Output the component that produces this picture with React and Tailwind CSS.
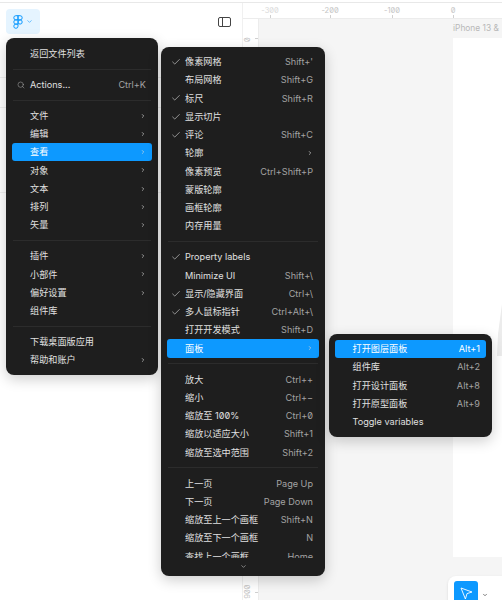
import React from 'react';
import { Check, ChevronDown, ChevronRight, Search } from 'lucide-react';

const mainMenu = [
  { label: '返回文件列表' },
  { divider: true },
  { label: 'Actions...', shortcut: 'Ctrl+K', search: true },
  { divider: true },
  { label: '文件', more: true },
  { label: '编辑', more: true },
  { label: '查看', more: true, active: true },
  { label: '对象', more: true },
  { label: '文本', more: true },
  { label: '排列', more: true },
  { label: '矢量', more: true },
  { divider: true },
  { label: '插件', more: true },
  { label: '小部件', more: true },
  { label: '偏好设置', more: true },
  { label: '组件库' },
  { divider: true },
  { label: '下载桌面版应用' },
  { label: '帮助和账户', more: true },
];

const viewMenu = [
  { label: '像素网格', shortcut: "Shift+'", checked: true },
  { label: '布局网格', shortcut: 'Shift+G' },
  { label: '标尺', shortcut: 'Shift+R', checked: true },
  { label: '显示切片', checked: true },
  { label: '评论', shortcut: 'Shift+C', checked: true },
  { label: '轮廓', more: true },
  { label: '像素预览', shortcut: 'Ctrl+Shift+P' },
  { label: '蒙版轮廓' },
  { label: '画框轮廓' },
  { label: '内存用量' },
  { divider: true },
  { label: 'Property labels', checked: true },
  { label: 'Minimize UI', shortcut: 'Shift+\\' },
  { label: '显示/隐藏界面', shortcut: 'Ctrl+\\', checked: true },
  { label: '多人鼠标指针', shortcut: 'Ctrl+Alt+\\', checked: true },
  { label: '打开开发模式', shortcut: 'Shift+D' },
  { label: '面板', more: true, active: true },
  { divider: true },
  { label: '放大', shortcut: 'Ctrl++' },
  { label: '缩小', shortcut: 'Ctrl+−' },
  { label: '缩放至 100%', shortcut: 'Ctrl+0' },
  { label: '缩放以适应大小', shortcut: 'Shift+1' },
  { label: '缩放至选中范围', shortcut: 'Shift+2' },
  { divider: true },
  { label: '上一页', shortcut: 'Page Up' },
  { label: '下一页', shortcut: 'Page Down' },
  { label: '缩放至上一个画框', shortcut: 'Shift+N' },
  { label: '缩放至下一个画框', shortcut: 'N' },
  { label: '查找上一个画框', shortcut: 'Home' },
];

const panelMenu = [
  { label: '打开图层面板', shortcut: 'Alt+1', active: true },
  { label: '组件库', shortcut: 'Alt+2' },
  { label: '打开设计面板', shortcut: 'Alt+8' },
  { label: '打开原型面板', shortcut: 'Alt+9' },
  { label: 'Toggle variables' },
];

const MenuRows = ({ items }) =>
  items.map((item, i) => {
    if (item.divider) {
      return (
        <div key={i} className="flex h-[12.75px] items-center px-[1px]">
          <div className="h-px w-full bg-[#2c2c2c]" />
        </div>
      );
    }
    return (
      <div
        key={i}
        className={`relative flex h-[18.25px] shrink-0 items-center justify-between rounded-[3px] pl-[18px] pr-[6px] ${
          item.active ? 'bg-[#0d99ff] text-white' : 'text-[#e0e0e0]'
        }`}
      >
        {item.checked && <Check size={10} strokeWidth={1.5} className="absolute left-[4px] text-[#d8d8d8]" />}
        {item.search && <Search size={8} strokeWidth={1.5} className="absolute left-[5px] text-[#b0b0b0]" />}
        <span className="whitespace-nowrap">{item.label}</span>
        {item.shortcut && <span className={item.active ? 'text-white' : 'text-[#a3a3a3]'}>{item.shortcut}</span>}
        {item.more && <ChevronRight size={6} strokeWidth={2.5} className="text-[#d8d8d8]" />}
      </div>
    );
  });

const FigmaLogo = () => (
  <svg width="10" height="14" viewBox="0 0 10 14" fill="none" stroke="#0d99ff" strokeWidth="1">
    <path d="M5 .7H2.9a2.1 2.1 0 0 0 0 4.2H5z" />
    <path d="M5 .7h2.1a2.1 2.1 0 0 1 0 4.2H5z" />
    <path d="M5 4.9H2.9a2.1 2.1 0 0 0 0 4.2H5z" />
    <circle cx="7.1" cy="7" r="2.1" />
    <path d="M5 9.1H2.9A2.1 2.1 0 1 0 5 11.2z" />
  </svg>
);

const ticks = [
  { label: '-300', tick: 'left-[27px]', text: 'text-[#dadada]' },
  { label: '-200', tick: 'left-[87px]', text: 'text-[#c4c4c4]' },
  { label: '-100', tick: 'left-[149px]', text: 'text-[#c4c4c4]' },
  { label: '0', tick: 'left-[210px]', text: 'text-[#c4c4c4]' },
];

export default function App() {
  return (
    <div className="relative flex h-[600px] w-[502px] flex-col overflow-hidden bg-white font-['Inter','Noto_Sans_CJK_SC',sans-serif] text-[9.15px] [font-feature-settings:'zero']">
      <div className="h-[3px] shrink-0 border-b border-[#e8e8e8] bg-white" />
      <div className="flex min-h-0 flex-1">
        {/* left panel */}
        <div className="w-[243px] shrink-0 border-r border-[#f0f0f0] bg-white">
          <div className="flex h-[75px] items-start justify-between border-b border-[#f0f0f0] pl-[6px] pr-[11px] pt-[6px]">
            <div className="flex h-[25px] w-[34px] items-center justify-center gap-[3px] rounded-[4px] bg-[#e5f4ff]">
              <FigmaLogo />
              <ChevronDown size={7} strokeWidth={2} className="text-[#0d99ff]" />
            </div>
            <svg width="13" height="10" viewBox="0 0 13 10" fill="none" stroke="#444" strokeWidth="1" className="mt-[8px]">
              <rect x=".5" y=".5" width="12" height="9" rx="1.5" />
              <path d="M4.5 .5v9" />
            </svg>
          </div>
          <div className="h-[30px] border-b border-[#f0f0f0]" />
          <div className="h-[85px] border-b border-[#f0f0f0]" />
        </div>

        {/* rulers + canvas */}
        <div className="flex min-w-0 flex-1 flex-col">
          <div className="relative h-[16px] shrink-0 border-b border-[#ececec] text-[7.5px]">
            {ticks.map((t) => (
              <React.Fragment key={t.label}>
                <span className={`absolute top-[2px] -translate-x-1/2 ${t.tick} ${t.text}`}>{t.label}</span>
                <div className={`absolute bottom-0 h-[3px] w-px bg-[#d0d0d0] ${t.tick}`} />
              </React.Fragment>
            ))}
          </div>
          <div className="flex min-h-0 flex-1">
            <div className="relative w-[16px] shrink-0 border-r border-[#ececec] bg-white text-[7.5px] text-[#c4c4c4]">
              <span className="absolute left-[2px] top-[15px] -rotate-90">0</span>
              <div className="absolute right-0 top-[19px] h-px w-[3px] bg-[#d0d0d0]" />
              <span className="absolute left-[-2px] top-[567px] -rotate-90">900</span>
              <div className="absolute right-0 top-[573px] h-px w-[3px] bg-[#d0d0d0]" />
            </div>
            <div className="relative min-w-0 flex-1 bg-[#f5f5f5]">
              <span className="absolute left-[194px] top-[3px] whitespace-nowrap text-[8.4px] text-[#b8b8b8]">iPhone 13 &amp;</span>
              <div className="absolute bottom-[43px] left-[194px] right-0 top-[19px] bg-white" />
              <svg width="5" height="52" viewBox="0 0 5 52" className="absolute right-0 top-[285px]">
                <polygon points="5,0 5,52 0,52 1,30" fill="#ececec" />
              </svg>
              <div className="absolute left-[189px] top-[557px] h-[30px] w-[60px] rounded-tl-[8px] bg-white pl-[6px] pt-[5px] shadow-sm">
                <div className="flex h-[25px] w-[24px] items-center justify-center rounded-[3px] bg-[#0d99ff]">
                  <svg width="13" height="13" viewBox="0 0 13 13" fill="none" stroke="#fff" strokeWidth="0.9" strokeLinejoin="round">
                    <path d="M1 1l11 4-5 1.6L5.4 12z" />
                  </svg>
                </div>
                <ChevronDown size={6} strokeWidth={2.5} className="absolute left-[34px] top-[16px] text-[#333]" />
              </div>
            </div>
          </div>
        </div>
      </div>

      {/* menus */}
      <div className="absolute left-[6px] top-[38px] w-[152px] rounded-[8px] bg-[#1e1e1e] px-[6px] pb-[5.5px] pt-[6.5px] shadow-[0_4px_14px_rgba(0,0,0,0.2)]">
        <MenuRows items={mainMenu} />
      </div>
      <div className="absolute left-[161px] top-[47px] h-[529px] w-[164px] rounded-[8px] bg-[#1e1e1e] px-[6px] pt-[5.75px] shadow-[0_4px_14px_rgba(0,0,0,0.2)]">
        <div className="h-[505px] overflow-hidden">
          <MenuRows items={viewMenu} />
        </div>
        <div className="flex justify-center pt-[5px]">
          <ChevronDown size={7} strokeWidth={2} className="text-[#c8c8c8]" />
        </div>
      </div>
      <div className="absolute left-[329px] top-[334px] w-[163px] rounded-[8px] bg-[#1e1e1e] pb-[5.5px] pl-[5.5px] pr-[6px] pt-[5.75px] shadow-[0_4px_14px_rgba(0,0,0,0.2)]">
        <MenuRows items={panelMenu} />
      </div>
    </div>
  );
}
